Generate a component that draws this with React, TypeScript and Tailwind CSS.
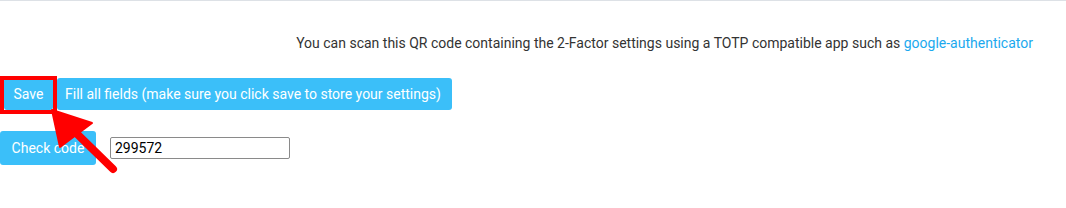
export default function App() {
  return (
    <div className="relative w-[1066px] h-[208px] bg-white border-t border-[#dde1e6] font-['Roboto',sans-serif] text-[14px] text-[#333]">
      {/* Info line */}
      <div className="flex justify-end pt-[33px] pr-[33px] leading-[18px]">
        <span>
          You can scan this QR code containing the 2-Factor settings using a TOTP compatible app such as{' '}
          <a href="#" className="text-[#1ba9ee]">google-authenticator</a>
        </span>
      </div>

      {/* Save row */}
      <div className="flex items-center gap-[4px] pl-[4px] mt-[26px]">
        <button className="h-[32px] w-[49px] rounded-[3px] bg-[#3bbff9] text-white text-[14px]">Save</button>
        <button className="h-[32px] pl-[8px] pr-[11px] rounded-[3px] bg-[#3bbff9] text-white text-[14px]">
          Fill all fields (make sure you click save to store your settings)
        </button>
      </div>

      {/* Check row */}
      <div className="flex items-center gap-[14px] mt-[21px]">
        <button className="h-[34px] w-[96px] rounded-[3px] bg-[#3bbff9] text-white text-[14px]">Check code</button>
        <input
          defaultValue="299572"
          className="h-[22px] w-[180px] border border-[#8a8a8a] rounded-[2px] px-[4px] text-[14px] text-black"
        />
      </div>

      {/* Annotation: red box + arrow */}
      <div className="absolute left-0 top-[75px] w-[57px] h-[38px] border-4 border-[#ff0000]" />
      <svg className="absolute left-0 top-0" width="140" height="208" viewBox="0 0 140 208">
        <line x1="72" y1="128" x2="113" y2="168" stroke="#ff0000" strokeWidth="8" strokeLinecap="round" />
        <polygon points="52,109 60,146 92,122" fill="#ff0000" stroke="#ff0000" strokeWidth="2" strokeLinejoin="round" />
      </svg>
    </div>
  );
}
